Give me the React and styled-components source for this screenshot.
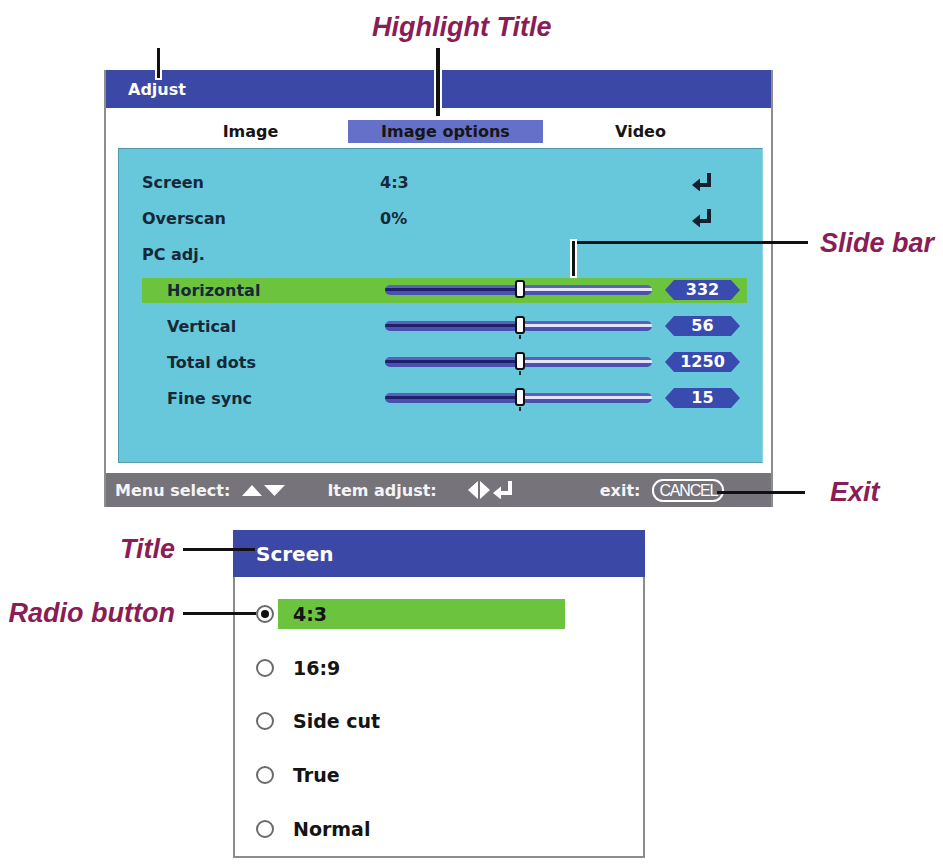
import React from 'react'
import styled, { createGlobalStyle } from 'styled-components'

const GlobalStyle = createGlobalStyle`
  html, body { margin: 0; padding: 0; background: #fff; }
  body { font-family: "DejaVu Sans", "Liberation Sans", sans-serif; }
`

const Page = styled.div`
  position: relative;
  width: 943px;
  height: 864px;
  overflow: hidden;
  display: flex;
  flex-direction: column;
  background: #fff;
`

/* ---------- main Adjust menu ---------- */
const Menu = styled.div`
  margin: 70px 0 0 104px;
  width: 669px;
  box-sizing: border-box;
  border: 2px solid #8e8e8e;
  border-top: none;
  border-bottom: none;
  background: #fff;
  display: flex;
  flex-direction: column;
`

const TitleBar = styled.div`
  height: ${(p) => p.$h || 38}px;
  background: #3c48a6;
  color: #fff;
  font-weight: bold;
  font-size: ${(p) => p.$size || 16}px;
  display: flex;
  align-items: center;
  padding-left: ${(p) => p.$pad || 22}px;
  box-sizing: border-box;
`

const Tabs = styled.div`
  display: grid;
  grid-template-columns: repeat(3, 195px);
  padding: 12px 0 5px 47px;
`

const Tab = styled.div`
  height: 23px;
  line-height: 23px;
  text-align: center;
  font-weight: bold;
  font-size: 16px;
  color: #161616;
  background: ${(p) => (p.$active ? '#6570c8' : 'transparent')};
`

const Screen = styled.div`
  margin: 0 8px 10px 12px;
  height: 315px;
  box-sizing: border-box;
  background: #67c8dc;
  border: 1px solid #4f9aab;
  border-right-color: #8fd6e4;
  border-bottom-color: #5a9caa;
  padding: 15px 0 0 23px;
  display: flex;
  flex-direction: column;
`

const Row = styled.div`
  height: 36px;
  width: 605px;
  display: flex;
  align-items: center;
`

const RowBody = styled.div`
  flex: 1;
  height: 25px;
  display: flex;
  align-items: center;
  background: ${(p) => (p.$active ? '#6cc43e' : 'transparent')};
  color: #172838;
  font-weight: bold;
  font-size: 16px;
`

const Label = styled.div`
  width: 238px;
  box-sizing: border-box;
  padding-left: ${(p) => (p.$indent ? 25 : 0)}px;
`

const Value = styled.div`
  flex: 1;
`

const EnterWrap = styled.div`
  width: 21px;
  height: 18px;
  margin-right: 34px;
  display: flex;
`

const Track = styled.div`
  position: relative;
  width: 267px;
  height: 10px;
  margin-left: 5px;
  display: flex;
`

const TrackHalf = styled.div`
  flex: 1;
  border-radius: ${(p) => (p.$side === 'left' ? '5px 0 0 5px' : '0 5px 5px 0')};
  background: linear-gradient(
    to bottom,
    #5a60bd 0 3px,
    ${(p) => (p.$side === 'left' ? '#1d2169' : '#e4e4fb')} 3px 6px,
    #4a50ae 6px
  );
`

const Thumb = styled.div`
  position: absolute;
  left: 130px;
  top: -5px;
  width: 10px;
  height: 18px;
  box-sizing: border-box;
  background: #fff;
  border: 2px solid #111;
  border-radius: 3px;
  &::after {
    content: '';
    display: ${(p) => (p.$tick ? 'block' : 'none')};
    position: absolute;
    left: 2px;
    top: 17px;
    width: 2px;
    height: 4px;
    background: #222;
  }
`

const Badge = styled.div`
  margin-left: 13px;
  width: 75px;
  height: 20px;
  line-height: 20px;
  background: #3a4bb0;
  color: #fff;
  font-size: 16px;
  font-weight: bold;
  text-align: center;
  clip-path: polygon(9px 0, calc(100% - 9px) 0, 100% 50%, calc(100% - 9px) 100%, 9px 100%, 0 50%);
`

const HelpBar = styled.div`
  height: 34px;
  background: #77737b;
  color: #f4f4f4;
  font-weight: bold;
  font-size: 16px;
  display: flex;
  align-items: center;
  padding-left: 9px;
`

const HelpItem = styled.span`
  margin-left: ${(p) => p.$gap || 0}px;
  display: flex;
  align-items: center;
`

const CancelKey = styled.span`
  margin-left: 12px;
  height: 19px;
  padding: 0 5px;
  border: 2px solid #fff;
  border-radius: 11px;
  font-family: "Liberation Sans", Arial, sans-serif;
  font-weight: normal;
  font-size: 16px;
  letter-spacing: -1.2px;
  line-height: 19px;
  color: #fff;
`

/* ---------- Screen sub-menu ---------- */
const Dialog = styled.div`
  margin: 23px 0 0 233px;
  width: 412px;
  display: flex;
  flex-direction: column;
`

const DialogBody = styled.div`
  height: 281px;
  box-sizing: border-box;
  border: 2px solid #8c8c8c;
  border-top: none;
  padding: 10px 0 0 21px;
  display: flex;
  flex-direction: column;
`

const Option = styled.div`
  height: 54px;
  display: flex;
  align-items: center;
  gap: 4px;
`

const Radio = styled.span`
  width: 18px;
  height: 18px;
  box-sizing: border-box;
  border: 2px solid #6a6a6a;
  border-radius: 50%;
  display: flex;
  align-items: center;
  justify-content: center;
  &::after {
    content: '';
    width: 8px;
    height: 8px;
    border-radius: 50%;
    background: ${(p) => (p.$checked ? '#111' : 'transparent')};
  }
`

const OptionLabel = styled.span`
  width: 287px;
  height: 30px;
  line-height: 30px;
  box-sizing: border-box;
  padding-left: 15px;
  background: ${(p) => (p.$active ? '#6cc43e' : 'transparent')};
  font-weight: bold;
  font-size: 19px;
  color: #141414;
`

/* ---------- callouts ---------- */
const Note = styled.div`
  position: absolute;
  top: ${(p) => p.$y}px;
  ${(p) => (p.$right != null ? `right: ${p.$right}px;` : `left: ${p.$x}px;`)}
  height: 30px;
  line-height: 30px;
  font-family: "Liberation Sans", Arial, sans-serif;
  font-weight: bold;
  font-style: italic;
  font-size: 27px;
  color: #8a1d56;
  white-space: nowrap;
`

const Leader = styled.div`
  position: absolute;
  z-index: 2;
  left: ${(p) => p.$x}px;
  top: ${(p) => p.$y}px;
  width: ${(p) => p.$w}px;
  height: ${(p) => p.$h}px;
  background: #111;
  box-shadow: ${(p) => (p.$halo ? '0 0 0 2px #fff' : 'none')};
`

const EnterIcon = ({ color }) => (
  <svg width="21" height="18" viewBox="0 0 21 18">
    <rect x="15" y="0" width="4" height="14" fill={color} />
    <rect x="7" y="10" width="12" height="4" fill={color} />
    <polygon points="0,12 8,5.5 8,18.5" fill={color} />
  </svg>
)

const UpDownIcon = () => (
  <svg width="43" height="13" viewBox="0 0 43 13">
    <polygon points="0,12 10,1 20,12" fill="#fff" />
    <polygon points="22,1 43,1 32.5,12" fill="#fff" />
  </svg>
)

const LeftRightIcon = () => (
  <svg width="22" height="18" viewBox="0 0 22 18">
    <polygon points="0,9 10,0 10,18" fill="#fff" />
    <polygon points="12,0 22,9 12,18" fill="#fff" />
  </svg>
)

const topRows = [
  { label: 'Screen', value: '4:3', enter: true },
  { label: 'Overscan', value: '0%', enter: true },
  { label: 'PC adj.', value: '' },
]

const sliders = [
  { label: 'Horizontal', value: '332', active: true },
  { label: 'Vertical', value: '56' },
  { label: 'Total dots', value: '1250' },
  { label: 'Fine sync', value: '15' },
]

const options = ['4:3', '16:9', 'Side cut', 'True', 'Normal']

export default function App() {
  return (
    <Page>
      <GlobalStyle />

      <Menu>
        <TitleBar>Adjust</TitleBar>
        <Tabs>
          <Tab>Image</Tab>
          <Tab $active>Image options</Tab>
          <Tab>Video</Tab>
        </Tabs>
        <Screen>
          {topRows.map((r) => (
            <Row key={r.label}>
              <RowBody>
                <Label>{r.label}</Label>
                <Value>{r.value}</Value>
                {r.enter && (
                  <EnterWrap>
                    <EnterIcon color="#16202e" />
                  </EnterWrap>
                )}
              </RowBody>
            </Row>
          ))}
          {sliders.map((s) => (
            <Row key={s.label}>
              <RowBody $active={s.active}>
                <Label $indent>{s.label}</Label>
                <Track>
                  <TrackHalf $side="left" />
                  <TrackHalf $side="right" />
                  <Thumb $tick={!s.active} />
                </Track>
                <Badge>{s.value}</Badge>
              </RowBody>
            </Row>
          ))}
        </Screen>
        <HelpBar>
          <HelpItem>Menu select:</HelpItem>
          <HelpItem $gap={12}>
            <UpDownIcon />
          </HelpItem>
          <HelpItem $gap={42}>Item adjust:</HelpItem>
          <HelpItem $gap={31}>
            <LeftRightIcon />
          </HelpItem>
          <HelpItem $gap={3}>
            <EnterIcon color="#fff" />
          </HelpItem>
          <HelpItem $gap={86}>
            exit:
            <CancelKey>CANCEL</CancelKey>
          </HelpItem>
        </HelpBar>
      </Menu>

      <Dialog>
        <TitleBar $h={47} $size={20} $pad={23}>
          Screen
        </TitleBar>
        <DialogBody>
          {options.map((o, i) => (
            <Option key={o}>
              <Radio $checked={i === 0} />
              <OptionLabel $active={i === 0}>{o}</OptionLabel>
            </Option>
          ))}
        </DialogBody>
      </Dialog>

      <Note $x={372} $y={12}>Highlight Title</Note>
      <Leader $x={157} $y={48} $w={3} $h={30} $halo />
      <Leader $x={436} $y={48} $w={4} $h={68} $halo />

      <Note $x={820} $y={228}>Slide bar</Note>
      <Leader $x={573} $y={241} $w={235} $h={3} />
      <Leader $x={572} $y={241} $w={3} $h={35} $halo />

      <Note $x={830} $y={477}>Exit</Note>
      <Leader $x={717} $y={491} $w={88} $h={3} />

      <Note $right={768} $y={534}>Title</Note>
      <Leader $x={183} $y={548} $w={72} $h={3} />

      <Note $right={768} $y={598}>Radio button</Note>
      <Leader $x={183} $y={612} $w={73} $h={3} />
    </Page>
  )
}
